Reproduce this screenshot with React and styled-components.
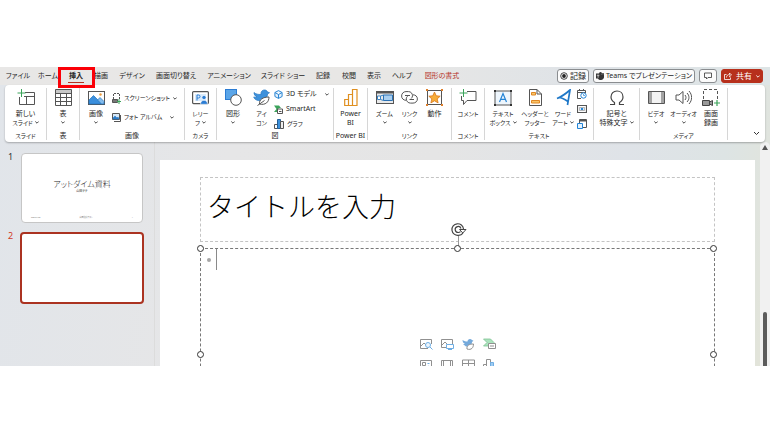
import React from "react";
import styled, { createGlobalStyle, css } from "styled-components";

const GlobalStyle = createGlobalStyle`
  * { box-sizing: border-box; }
  body { margin: 0; background: #fff; }
  body, button {
    font-family: "Noto Sans", "Noto Sans CJK JP", sans-serif;
    font-size: 7px;
    line-height: 8px;
    color: #262626;
    font-feature-settings: "palt";
  }
  button { margin: 0; padding: 0; border: 0; background: none; white-space: nowrap; }
`;

const Page = styled.div`
  height: 100vh;
  padding: 67px 0;
`;

const AppWindow = styled.div`
  display: flex;
  flex-direction: column;
  height: 100%;
  overflow: hidden;
  background: linear-gradient(100deg, #e1e5ea 0%, #e6e6e7 30%, #e5e5e5 55%, #dfe3e8 78%, #dde4e4 90%, #e3e4d8 100%);
`;

/* ---------- tab bar ---------- */

const TabBar = styled.header`
  display: flex;
  align-items: center;
  flex: none;
  height: 18px;
  padding: 0 7px 0 2px;
  background: linear-gradient(90deg, #e8e7e6 0%, #e8e7e5 50%, #dfe3e7 75%, #dee5e6 100%);
`;

const TabList = styled.nav`
  display: flex;
  flex: 1;
  height: 18px;
`;

const Tab = styled.button`
  position: relative;
  flex: none;
  width: ${(p) => p.$width}px;
  height: 18px;
  font-weight: ${(p) => (p.$active ? 700 : 400)};
  color: ${(p) => (p.$accent ? "#b5301f" : "#262626")};
`;

const Underline = styled.span`
  position: absolute;
  left: 6px;
  right: 6px;
  bottom: 2px;
  height: 1px;
  background: #b5301f;
`;

const Highlight = styled.span`
  position: absolute;
  z-index: 2;
  left: -4px;
  right: -5px;
  top: 0;
  height: 21px;
  border: 3px solid #fb0007;
`;

const Actions = styled.div`
  display: flex;
  gap: 4px;
`;

const ActionButton = styled.button`
  display: flex;
  align-items: center;
  justify-content: center;
  gap: 2px;
  height: 14px;
  padding: 0 ${(p) => (p.$tight ? 2 : 4)}px;
  border: 1px solid #8a8d90;
  border-radius: 3px;
  background: #fbfbfb;
  font-size: ${(p) => (p.$compact ? 7 : 8)}px;
  ${(p) =>
    p.$primary &&
    css`
      gap: 4px;
      border-color: #b7301c;
      background: #b7301c;
      color: #fff;
    `}
`;

/* ---------- ribbon ---------- */

const Ribbon = styled.section`
  position: relative;
  display: flex;
  flex: none;
  height: 57px;
  margin: 0 5px;
  padding: 3px 0 2px;
  border-radius: 4px;
  background: #fff;
  box-shadow: 0 1px 2px rgba(0, 0, 0, 0.28);
`;

const Group = styled.section`
  display: flex;
  flex-direction: column;
  flex: none;
  width: ${(p) => p.$width}px;
  border-right: 1px solid #d6d6d6;
`;

const GroupBody = styled.div`
  display: flex;
  flex: 1;
  justify-content: center;
`;

const GroupLabel = styled.div`
  height: 8px;
  font-size: ${(p) => (p.$kana ? 6 : 7)}px;
  text-align: center;
  white-space: nowrap;
`;

const Tool = styled.button`
  display: flex;
  flex-direction: column;
  align-items: center;
  flex: none;
  width: ${(p) => p.$width}px;
`;

const ToolIcon = styled.span`
  display: flex;
  align-items: center;
  justify-content: center;
  height: 21px;
  padding-bottom: 2px;
`;

const ToolLine = styled.span`
  display: flex;
  align-items: center;
  justify-content: center;
  gap: 2px;
  height: 9px;
  font-size: ${(p) => (p.$kana ? 6 : 7)}px;
`;

const Stack = styled.div`
  display: flex;
  flex-direction: column;
  flex: 1;
  gap: ${(p) => p.$gap}px;
  padding-top: ${(p) => p.$top}px;
`;

const StackButton = styled.button`
  display: flex;
  align-items: center;
  gap: 3px;
  height: 10px;
  font-size: ${(p) => (p.$kana ? 6 : 7)}px;
`;

const PushRight = styled.span`
  display: flex;
  margin-left: ${(p) => p.$space}px;
`;

const Collapse = styled.button`
  display: flex;
  align-self: flex-end;
  margin-left: auto;
  padding: 0 5px 4px 0;
`;

/* ---------- workspace ---------- */

const Workspace = styled.main`
  display: flex;
  flex: 1;
  min-height: 0;
`;

const Thumbnails = styled.aside`
  display: flex;
  flex-direction: column;
  gap: 9px;
  flex: none;
  width: 155px;
  padding: 11px 10px 0 8px;
  border-right: 1px solid #dcdcdc;
`;

const ThumbRow = styled.div`
  display: flex;
  align-items: flex-start;
`;

const ThumbNumber = styled.span`
  width: 12px;
  font-size: 9px;
  line-height: 8px;
  color: ${(p) => (p.$selected ? "#d13a24" : "#333")};
`;

const Thumb = styled.button`
  display: flex;
  flex-direction: column;
  align-items: center;
  flex: 1;
  height: ${(p) => (p.$selected ? 72 : 70)}px;
  margin: ${(p) => (p.$selected ? "0" : "0 1px")};
  padding: 25px 9px 2px;
  border: ${(p) => (p.$selected ? "2px solid #ab3321" : "1px solid #c6c6c6")};
  border-radius: 4px;
  background: #fff;
`;

const ThumbTitle = styled.span`
  font-size: 8px;
  line-height: 9px;
  font-weight: 300;
`;

const ThumbSub = styled.span`
  font-size: 3px;
  line-height: 6px;
`;

const ThumbFooter = styled.span`
  display: flex;
  justify-content: space-between;
  align-self: stretch;
  margin-top: auto;
  font-size: 2px;
  line-height: 4px;
  color: #777;
`;

const Stage = styled.section`
  flex: 1;
  min-width: 0;
  padding: 18px 5px 0;
`;

const Slide = styled.article`
  display: flex;
  flex-direction: column;
  gap: 6px;
  height: 100%;
  padding: 17px 40px 0;
  background: #fff;
`;

const TitleBox = styled.div`
  display: flex;
  align-items: center;
  flex: none;
  height: 65px;
  padding: 0 6px 6px;
  border: 1px dashed #c4c4c4;
`;

const Title = styled.h1`
  margin: 0;
  font-size: 27px;
  line-height: 32px;
  font-weight: 200;
  font-feature-settings: normal;
  color: #000;
`;

const ContentBox = styled.div`
  position: relative;
  flex: none;
  height: 214px;
  border: 1px dashed #777;
`;

const TextLine = styled.div`
  display: flex;
  align-items: center;
  gap: 5px;
  height: 21px;
  padding-left: 6px;
`;

const Bullet = styled.span`
  width: 4px;
  height: 4px;
  border-radius: 50%;
  background: #a6a6a6;
`;

const Caret = styled.span`
  width: 1px;
  height: 21px;
  background: #8a8a8a;
`;

const Handle = styled.span`
  position: absolute;
  left: ${(p) => p.$x};
  top: ${(p) => p.$y};
  width: 7px;
  height: 7px;
  margin: -4px;
  border: 1px solid #333;
  border-radius: 50%;
  background: #fff;
`;

const Rotate = styled.span`
  position: absolute;
  left: 50%;
  top: -27px;
  display: flex;
  margin-left: -8px;
`;

const Placeholders = styled.div`
  display: grid;
  grid-template-columns: repeat(4, 13px);
  justify-content: center;
  gap: 8px;
  margin-top: 67px;
`;

const PlaceholderButton = styled.button`
  display: flex;
  align-items: center;
  justify-content: center;
  height: 13px;
  opacity: 0.65;
`;

const Scrollbar = styled.div`
  display: flex;
  flex-direction: column;
  align-items: center;
  flex: none;
  width: 10px;
  padding-top: 3px;
  border-radius: 5px 5px 0 0;
  background: #f1f1f1;
`;

const ScrollThumb = styled.span`
  width: 4px;
  flex: 1;
  margin-top: 162px;
  border-radius: 2px 2px 0 0;
  background: #5c5c5c;
`;

/* ---------- icons ---------- */

const Svg = ({ w, h, children }) => (
  <svg width={w} height={h} viewBox={`0 0 ${w} ${h}`} fill="none" stroke="#555" strokeWidth="1" aria-hidden="true">
    {children}
  </svg>
);

const Chevron = ({ large, color = "#333" }) =>
  large ? (
    <Svg w={7} h={5}><path d="M1 1l2.500 2.500L6 1" stroke={color} /></Svg>
  ) : (
    <Svg w={4} h={3}><path d="M.3.5L2 2.200 3.700.5" stroke={color} strokeWidth=".9" /></Svg>
  );

const icons = {
  newSlide: (
    <Svg w={18} h={17}>
      <path d="M8 3.500h9.500v12H2.500V8M7 7.500h10.500M9.500 7.500v8" />
      <path d="M4.500 0v8M.5 4h8" stroke="#3ba45a" />
    </Svg>
  ),
  table: (
    <Svg w={17} h={17}>
      <rect x=".5" y=".5" width="16" height="4" fill="#c8c8c8" stroke="none" />
      <path d="M.5.5h16v16H.5zM.5 4.500h16M.5 8.500h16M.5 12.500h16M5.500 4.500v12M11.500 4.500v12" />
    </Svg>
  ),
  picture: (
    <Svg w={17} h={14}>
      <rect x=".5" y=".5" width="16" height="13" fill="#fff" />
      <path d="M1 9l4.500-4.500L14 13H1z" fill="#3b8fdd" stroke="#2374bd" strokeWidth=".7" />
      <path d="M9.500 9L12 6.500l4 4V13h-2.500z" fill="#83bced" stroke="#2374bd" strokeWidth=".7" />
      <circle cx="12.500" cy="3.500" r="1.200" fill="#ee9b3a" stroke="none" />
    </Svg>
  ),
  screenshot: (
    <Svg w={9} h={11}>
      <path d="M1.500 6V.5h6V6" strokeDasharray="2 1" />
      <path d="M.5 6.500h5v3h-5z" fill="#777" />
      <path d="M7 6v5M5 8.500h4" stroke="#3ba45a" />
    </Svg>
  ),
  album: (
    <Svg w={9} h={9}>
      <path d="M.5.5h7v6h-7z" fill="#d7e9f8" />
      <path d="M1 5l2-2 2 2 1-1 1 2H1z" fill="#2b7cc9" stroke="#2b7cc9" strokeWidth=".6" />
      <path d="M2 8.500h6.500V2" />
    </Svg>
  ),
  cameo: (
    <Svg w={17} h={14}>
      <rect x=".6" y=".6" width="15.800" height="12" rx="1" strokeWidth="1.200" />
      <path d="M3 3h11v7H3z" fill="#d9eafa" stroke="none" />
      <path d="M5 9.500V4h1.500a1.500 1.500 0 010 3H5" stroke="#2b7cd3" />
      <circle cx="12" cy="6.500" r="2.100" fill="#2b7cd3" stroke="#fff" strokeWidth=".6" />
      <path d="M8.500 13.300c0-5.300 7-5.300 7 0z" fill="#2b7cd3" stroke="#fff" strokeWidth=".6" />
    </Svg>
  ),
  shapes: (
    <Svg w={17} h={17}>
      <rect x=".5" y=".5" width="11" height="10" fill="#5aa5e8" stroke="#2b7cd3" />
      <circle cx="11" cy="11" r="5.300" fill="#fff" />
    </Svg>
  ),
  bird: (
    <Svg w={17} h={17}>
      <path d="M1 3.500c2 1.700 4 2 7 2C7.500 2 10 .8 12 1c1.500.2 2.200 1 2.500 2l2 .7-2 1.300c0 3-2 6-6 6.500C4 12 1.500 10.500.7 8c1.500.3 2.300.3 3.300 0C2 7 1 5.500 1 3.500z" fill="#3d91dc" stroke="#2376c2" strokeWidth=".7" />
      <path d="M6.500 15c-.5-4.500 3.500-7 9.500-7 0 5-3.500 8.500-9.500 7zM4.500 16.500l7-5" fill="#fff" />
    </Svg>
  ),
  cube: (
    <Svg w={9} h={9}>
      <path d="M4.500.6l3.600 1.900v4L4.500 8.400.9 6.500v-4zM.9 2.500l3.600 2 3.600-2M4.500 4.500v3.900" stroke="#2b86d4" fill="#e4f1fc" />
    </Svg>
  ),
  smartArt: (
    <Svg w={9} h={9}>
      <path d="M0 .5h5l2 2.500H4.500v4H0L2.500 4z" fill="#3ba45a" stroke="none" />
      <path d="M3.500 4h5v4.500h-5zM5 6.500h2.500" fill="#fff" />
    </Svg>
  ),
  chart: (
    <Svg w={10} h={10}>
      <path d="M.5 5.500h3v4h-3z" fill="#fff" />
      <path d="M3.500.5h3v9h-3z" fill="#3d91dc" stroke="#235f97" />
      <path d="M6.500 2.500h3v7h-3z" fill="#eee" />
    </Svg>
  ),
  powerBi: (
    <Svg w={14} h={17}>
      <path d="M8.500 5.500v-5h4.500v16H.700v-6H4.500v-5h4v11M4.500 10.500v6" stroke="#df8f20" strokeWidth="1.200" />
    </Svg>
  ),
  zoom: (
    <Svg w={18} h={14}>
      <rect x=".5" y=".5" width="17" height="12" fill="#e9e9e9" />
      <path d="M1 1.500h16" strokeWidth="2" />
      <path d="M7.500 4h9v5.500h-9z" fill="#a9cff0" stroke="#2b72b5" />
      <path d="M1.500 5h3v3.500h-3zM4.500 5l3-1M4.500 8.500l3 1" fill="#fff" stroke="#3a83c4" />
    </Svg>
  ),
  link: (
    <Svg w={17} h={13}>
      <path d="M5 9.300C2.500 9.300.6 7.500.6 5 .6 2.500 2.500.6 5 .6h2.500c2.400 0 4 1.900 4 4.200 0 1-.5 2-1.300 2.700" />
      <path d="M6.800 5C5.800 5.700 5.300 6.700 5.300 7.900c0 2.400 1.900 4.200 4.200 4.200H12c2.500 0 4.400-1.800 4.400-4.200S14.500 3.800 12 3.800M4 4.500h5M8.500 8.500h4.500" />
    </Svg>
  ),
  action: (
    <Svg w={17} h={17}>
      <rect x="1.500" y="1.500" width="14" height="14" />
      <path d="M8.500 3l1.700 3.800 4 .4-3 2.700.9 4-3.600-2.100-3.600 2.100.9-4-3-2.700 4-.4z" fill="#f7ad3a" stroke="#d87516" strokeWidth=".8" />
      <path d="M0 0h2v2H0zM15 0h2v2h-2zM0 15h2v2H0zM15 15h2v2h-2z" fill="#df802c" stroke="none" />
    </Svg>
  ),
  comment: (
    <Svg w={18} h={17}>
      <path d="M8 2.500h9v9H8l-3.500 4v-4h-2V7" />
      <path d="M4.500 0v8M.5 4h8" stroke="#3ba45a" />
    </Svg>
  ),
  textBox: (
    <Svg w={18} h={16}>
      <rect x="1" y="1" width="16" height="14" fill="#eef6fd" />
      <path d="M5.500 12L9 3.500l3.500 8.500M6.800 9.300h4.400" stroke="#2384d6" strokeWidth="1.200" />
      <path d="M0 0h2v2H0zM16 0h2v2h-2zM0 14h2v2H0zM16 14h2v2h-2z" fill="#333" stroke="none" />
    </Svg>
  ),
  header: (
    <Svg w={13} h={17}>
      <path d="M.5.5H8L12.500 5v11.500H.5zM8 .5V5h4.500" />
      <path d="M2.500 3.500h4v2.500h-4zM2.500 11.500h8V14h-8z" fill="#f7c56b" stroke="#e18722" />
    </Svg>
  ),
  wordArt: (
    <Svg w={15} h={17}>
      <path d="M1 9.500C6 7.500 10 4.500 14 1l-2.500 15M3 8.500c3 0 6 2 9 4" stroke="#1f78c8" strokeWidth="1.700" />
    </Svg>
  ),
  date: (
    <Svg w={10} h={10}>
      <path d="M8.500 4V1.500h-8v8H4M.5 3.500h8M2.500 0v2M6.500 0v2" />
      <circle cx="6.500" cy="6.500" r="2.700" fill="#fff" stroke="#2384d6" />
      <path d="M6.500 5v1.500H8" stroke="#2384d6" strokeWidth=".7" />
    </Svg>
  ),
  slideNumber: (
    <Svg w={10} h={8}>
      <path d="M.5.5h9v7h-9z" strokeWidth="1.200" />
      <path d="M2.500 2.500h5v3h-5z" fill="#d6eafb" stroke="#999" strokeWidth=".7" />
      <path d="M4 3h2v2H4z" fill="#2384d6" stroke="none" />
    </Svg>
  ),
  object: (
    <Svg w={10} h={10}>
      <path d="M2.500 4V.5h7v8H6" />
      <path d="M3 1.500h6" strokeWidth="2" />
      <path d="M.5 4.500h5v5h-5z" fill="#e5f2fd" stroke="#2384d6" />
    </Svg>
  ),
  omega: (
    <Svg w={16} h={16}>
      <path d="M1 14.500h4.500v-2C3 11 2 9 2 7c0-3.500 2.500-6 6-6s6 2.500 6 6c0 2-1 4-3.500 5.500v2H15" strokeWidth="1.200" stroke="#444" />
    </Svg>
  ),
  video: (
    <Svg w={17} h={13}>
      <path d="M.5.5h16v12H.5z" fill="#f3f3f3" />
      <path d="M3.500.5v12M13.500.5v12" strokeWidth=".5" />
      <path d="M2 1.500V12M15 1.500V12" strokeWidth="2" strokeDasharray="1 1" />
    </Svg>
  ),
  audio: (
    <Svg w={17} h={15}>
      <path d="M1 5h3l4-3.500v12L4 10H1z" />
      <path d="M10 5c1.300 1.500 1.300 3.500 0 5M12 3c2.600 2.700 2.600 6.300 0 9M14 1c3.500 4 3.500 9 0 13" />
    </Svg>
  ),
  screenRecord: (
    <Svg w={18} h={18}>
      <path d="M1.500 10V.5h14V12" strokeDasharray="3 2" />
      <path d="M.5 11.500h7v5h-7zM7.500 13l3-1.500v5l-3-1.500" fill="#999" stroke="#444" />
      <path d="M15 11v6M12 14h6" stroke="#3ba45a" strokeWidth="1.200" />
    </Svg>
  ),
  record: (
    <Svg w={8} h={8}>
      <circle cx="4" cy="4" r="3.300" stroke="#333" strokeWidth=".9" />
      <circle cx="4" cy="4" r="1.900" fill="#222" stroke="none" />
    </Svg>
  ),
  teams: (
    <Svg w={8} h={8}>
      <circle cx="4.500" cy="1.500" r="1.500" fill="#333" stroke="none" />
      <circle cx="7" cy="2" r="1" fill="#333" stroke="none" />
      <path d="M0 1.500h4v1h4v3C7.500 7 6.500 8 5 8S2.500 7.500 2 6.500H0z" fill="#333" stroke="none" />
      <path d="M.8 3.200h2.600M2.100 3.200v2.500" stroke="#fff" strokeWidth=".7" />
    </Svg>
  ),
  bubble: (
    <Svg w={8} h={8}>
      <path d="M.5 1h7v4.500H4L2.500 7V5.500h-2z" stroke="#333" strokeWidth=".8" />
    </Svg>
  ),
  share: (
    <Svg w={8} h={8}>
      <path d="M2.500 2.500h-2v5h6v-2M2.500 5.500C2.500 3.500 4 2.500 5.500 2.500V1L7.500 3 5.500 4.800V3.500" stroke="#fff" strokeWidth=".8" />
    </Svg>
  ),
  rotate: (
    <Svg w={17} h={27}>
      <path d="M8.500 14v12" stroke="#999" />
      <path d="M13.500 7A5.800 5.800 0 108.500 13.300c2 0 3.500-.8 4.500-2.100" stroke="#444" strokeWidth="1.200" fill="#fff" />
      <path d="M11 6.500A3 3 0 108.300 10.500c.9 0 1.600-.3 2.200-.9" stroke="#444" strokeWidth="1.200" />
      <path d="M9.500 7.500h6.500l-3.200 3.500z" fill="#fff" stroke="#444" />
    </Svg>
  ),
  stock: (
    <Svg w={13} h={12}>
      <path d="M8 10.500H.5v-9h11V6M1 8l3-3 3 3" />
      <circle cx="8" cy="7" r="2.500" stroke="#2384d6" fill="#e4f1fc" />
      <path d="M10 9l2.500 2.500" stroke="#2384d6" />
    </Svg>
  ),
  device: (
    <Svg w={13} h={12}>
      <path d="M5 9.500H.5v-8h11V6M1 7l3-3 3 3" />
      <path d="M5.500 6.500h7v4h-7zM7 11.500h4" stroke="#2384d6" fill="#fff" />
    </Svg>
  ),
  smallBird: (
    <Svg w={12} h={12}>
      <path d="M.5 2c2 1.500 3 1.500 5 1.500C5.500 1 8.500 0 10 2l1.500.7L10 4c0 3-3 5-6 4.500L1 6h2C1.500 5 .5 4 .5 2z" fill="#2b7cc9" stroke="none" />
      <path d="M5 11c-.5-3.500 2-5 6.500-5 0 3.500-2 6.500-6.500 5z" fill="#fff" />
    </Svg>
  ),
  smallSmartArt: (
    <Svg w={13} h={12}>
      <path d="M.5 1h7l3.500 3.500L7.500 8h-7L4 4.500z" fill="#7fd39a" stroke="#3ba45a" strokeWidth=".8" />
      <path d="M5.500 5.500h7v5h-7zM7 8h4" fill="#fff" />
    </Svg>
  ),
  cameoSmall: (
    <Svg w={12} h={12}>
      <path d="M.5 1.500h11v8H.5zM2.500 3.500h3v3h-3z" />
      <path d="M6.500 9.500c0-3 4-3 4 0zM7.500 4.500h2" stroke="#2384d6" fill="#2384d6" />
    </Svg>
  ),
  videoSmall: (
    <Svg w={12} h={12}>
      <path d="M.5 1.500h11v9H.5zM2.500 1.500v9M9.500 1.500v9" />
    </Svg>
  ),
  tableSmall: (
    <Svg w={13} h={12}>
      <path d="M.5 1h12v10H.5zM.5 4.500h12M.5 7.500h12M6.500 1v10" />
    </Svg>
  ),
  chartSmall: (
    <Svg w={12} h={13}>
      <path d="M.5 6.500h3v6h-3zM3.500 1.500h4v11h-4z" fill="#fff" />
      <path d="M7.500 4.500h3v8h-3z" fill="#6db0ea" stroke="#2384d6" />
    </Svg>
  ),
};

const tabs = [
  ["ファイル", 32], ["ホーム", 28], ["挿入", 28], ["描画", 22], ["デザイン", 40],
  ["画面切り替え", 48], ["アニメーション", 58], ["スライド ショー", 50], ["記録", 30],
  ["校閲", 22], ["表示", 28], ["ヘルプ", 28], ["図形の書式", 52],
];

const placeholders = [
  ["stock", "ストック画像"], ["device", "図"], ["smallBird", "アイコン"], ["smallSmartArt", "SmartArt"],
  ["cameoSmall", "カメオ"], ["videoSmall", "ビデオ"], ["tableSmall", "表"], ["chartSmall", "グラフ"],
];

const isKana = (text = "") => /[ァ-ヶ]/.test(text) && !/[一-龠A-Za-z]/.test(text);

function ToolButton({ icon, lines, width, menu }) {
  return (
    <Tool $width={width}>
      <ToolIcon>{icons[icon]}</ToolIcon>
      {lines.map((line, i) => (
        <ToolLine key={line} $kana={isKana(line)}>
          {line}
          {menu === "inline" && i === lines.length - 1 && <Chevron />}
        </ToolLine>
      ))}
      {menu === "below" && <ToolLine><Chevron /></ToolLine>}
    </Tool>
  );
}

function StackTool({ icon, text, label, menu, space = 0 }) {
  return (
    <StackButton aria-label={label} $kana={isKana(text)}>
      {icons[icon]}
      {text}
      {menu && <PushRight $space={space}><Chevron /></PushRight>}
    </StackButton>
  );
}

function RibbonGroup({ label, width, children }) {
  return (
    <Group $width={width}>
      <GroupBody>{children}</GroupBody>
      <GroupLabel $kana={isKana(label)}>{label}</GroupLabel>
    </Group>
  );
}

export default function App() {
  return (
    <Page>
      <GlobalStyle />
      <AppWindow>
        <TabBar>
          <TabList>
            {tabs.map(([name, width]) => (
              <Tab key={name} $width={width} $active={name === "挿入"} $accent={name === "図形の書式"}>
                {name}
                {name === "挿入" && <><Underline /><Highlight /></>}
              </Tab>
            ))}
          </TabList>
          <Actions>
            <ActionButton $tight>{icons.record}記録</ActionButton>
            <ActionButton $tight $compact>{icons.teams}Teams でプレゼンテーション</ActionButton>
            <ActionButton aria-label="コメント">{icons.bubble}</ActionButton>
            <ActionButton $primary $tight>{icons.share}共有<Chevron color="#fff" /></ActionButton>
          </Actions>
        </TabBar>

        <Ribbon>
          <RibbonGroup label="スライド" width={42}>
            <ToolButton icon="newSlide" lines={["新しい", "スライド"]} width={41} menu="inline" />
          </RibbonGroup>
          <RibbonGroup label="表" width={33}>
            <ToolButton icon="table" lines={["表"]} width={32} menu="below" />
          </RibbonGroup>
          <RibbonGroup label="画像" width={105}>
            <ToolButton icon="picture" lines={["画像"]} width={32} menu="below" />
            <Stack $gap={9} $top={5}>
              <StackTool icon="screenshot" text="スクリーンショット" menu />
              <StackTool icon="album" text="フォト アルバム" menu space={5} />
            </Stack>
          </RibbonGroup>
          <RibbonGroup label="カメラ" width={32}>
            <ToolButton icon="cameo" lines={["レリー", "フ"]} width={31} menu="inline" />
          </RibbonGroup>
          <RibbonGroup label="図" width={117}>
            <ToolButton icon="shapes" lines={["図形"]} width={32} menu="below" />
            <ToolButton icon="bird" lines={["アイ", "コン"]} width={25} />
            <Stack $gap={5} $top={1}>
              <StackTool icon="cube" text="3D モデル" menu space={5} />
              <StackTool icon="smartArt" text="SmartArt" />
              <StackTool icon="chart" text="グラフ" />
            </Stack>
          </RibbonGroup>
          <RibbonGroup label="Power BI" width={34}>
            <ToolButton icon="powerBi" lines={["Power", "BI"]} width={33} />
          </RibbonGroup>
          <RibbonGroup label="リンク" width={84}>
            <ToolButton icon="zoom" lines={["ズーム"]} width={25} menu="below" />
            <ToolButton icon="link" lines={["リンク"]} width={25} menu="below" />
            <ToolButton icon="action" lines={["動作"]} width={25} />
          </RibbonGroup>
          <RibbonGroup label="コメント" width={33}>
            <ToolButton icon="comment" lines={["コメント"]} width={32} />
          </RibbonGroup>
          <RibbonGroup label="テキスト" width={109}>
            <ToolButton icon="textBox" lines={["テキスト", "ボックス"]} width={36} menu="inline" />
            <ToolButton icon="header" lines={["ヘッダーと", "フッター"]} width={28} />
            <ToolButton icon="wordArt" lines={["ワード", "アート"]} width={28} menu="inline" />
            <Stack $gap={5} $top={1}>
              <StackTool icon="date" label="日付と時刻" />
              <StackTool icon="slideNumber" label="スライド番号" />
              <StackTool icon="object" label="オブジェクト" />
            </Stack>
          </RibbonGroup>
          <RibbonGroup width={46}>
            <ToolButton icon="omega" lines={["記号と", "特殊文字"]} width={45} menu="inline" />
          </RibbonGroup>
          <RibbonGroup label="メディア" width={88}>
            <ToolButton icon="video" lines={["ビデオ"]} width={27} menu="below" />
            <ToolButton icon="audio" lines={["オーディオ"]} width={28} menu="below" />
            <ToolButton icon="screenRecord" lines={["画面", "録画"]} width={27} />
          </RibbonGroup>
          <Collapse aria-label="リボンを折りたたむ"><Chevron large /></Collapse>
        </Ribbon>

        <Workspace>
          <Thumbnails>
            <ThumbRow>
              <ThumbNumber>1</ThumbNumber>
              <Thumb>
                <ThumbTitle>アットダイム資料</ThumbTitle>
                <ThumbSub>山田テテ</ThumbSub>
                <ThumbFooter><span>2023/7/28</span><span>山田資料テスト</span><span>1</span></ThumbFooter>
              </Thumb>
            </ThumbRow>
            <ThumbRow>
              <ThumbNumber $selected>2</ThumbNumber>
              <Thumb $selected aria-label="スライド 2" />
            </ThumbRow>
          </Thumbnails>
          <Stage>
            <Slide>
              <TitleBox><Title>タイトルを入力</Title></TitleBox>
              <ContentBox>
                <TextLine><Bullet /><Caret /></TextLine>
                <Placeholders>
                  {placeholders.map(([icon, label]) => (
                    <PlaceholderButton key={icon} aria-label={label}>{icons[icon]}</PlaceholderButton>
                  ))}
                </Placeholders>
                <Rotate>{icons.rotate}</Rotate>
                <Handle $x="0" $y="0" />
                <Handle $x="50%" $y="0" />
                <Handle $x="100%" $y="0" />
                <Handle $x="0" $y="50%" />
                <Handle $x="100%" $y="50%" />
              </ContentBox>
            </Slide>
          </Stage>
          <Scrollbar>
            <Svg w={6} h={5}><path d="M3 0l3 5H0z" fill="#555" stroke="none" /></Svg>
            <ScrollThumb />
          </Scrollbar>
        </Workspace>
      </AppWindow>
    </Page>
  );
}
